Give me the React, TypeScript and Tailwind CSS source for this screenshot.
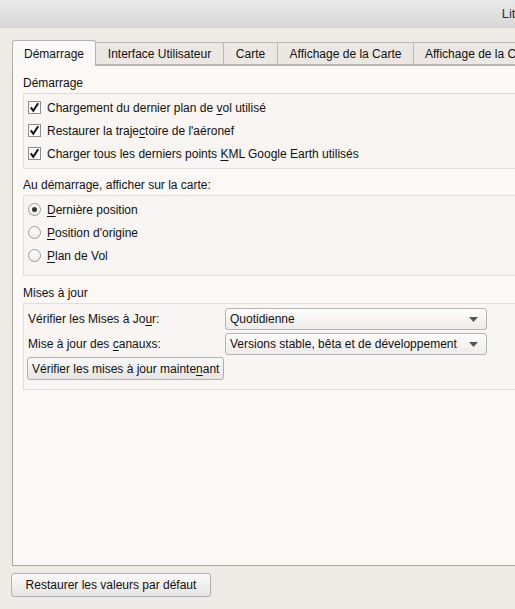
import React from "react";

const font = { fontFamily: '"Liberation Sans", Arial, sans-serif' };

const Ul = ({ children }: { children: React.ReactNode }) => (
  <span className="underline underline-offset-2">{children}</span>
);

const Check = ({ children }: { children: React.ReactNode }) => (
  <div className="flex items-center h-[23px] pl-[4px]">
    <span className="w-[13px] h-[13px] border border-[#8e8e8e] bg-white flex items-center justify-center mr-[6px]">
      <svg width="11" height="11" viewBox="0 0 11 11">
        <path d="M1.8 5.3 L4.3 8.8 L9.2 1.2" stroke="#111" strokeWidth="2" fill="none" />
      </svg>
    </span>
    <span>{children}</span>
  </div>
);

const Radio = ({ on, children }: { on?: boolean; children: React.ReactNode }) => (
  <div className="flex items-center h-[23px] pl-[4px]">
    <span className="w-[13px] h-[13px] rounded-full border border-[#9a9a9a] bg-gradient-to-b from-white to-[#ecebea] flex items-center justify-center mr-[6px]">
      {on && <span className="w-[5px] h-[5px] rounded-full bg-[#333]" />}
    </span>
    <span>{children}</span>
  </div>
);

const Combo = ({ children }: { children: React.ReactNode }) => (
  <div className="w-[262px] h-[22px] border border-[#b5b5b5] rounded-[3px] bg-gradient-to-b from-[#fdfdfd] to-[#eeecea] flex items-center justify-between pl-[4px] pr-[8px]">
    <span>{children}</span>
    <svg width="9" height="5" viewBox="0 0 9 5">
      <path d="M0 0 L9 0 L4.5 5 Z" fill="#555" />
    </svg>
  </div>
);

const Tab = ({ w, active, children }: { w: string; active?: boolean; children: React.ReactNode }) => (
  <div
    className={
      active
        ? `${w} h-[26px] -mb-px bg-[#fbf9f7] border border-b-0 border-[#b3b3b3] rounded-t-[3px] flex items-center justify-center relative z-10`
        : `${w} h-[23px] bg-[#ebe8e4] border border-l-0 border-[#b8b8b8] flex items-center justify-center shrink-0`
    }
  >
    {children}
  </div>
);

export default function App() {
  return (
    <div className="w-[515px] h-[609px] bg-[#eeebe7] text-[12px] leading-[18px] text-[#111] overflow-hidden flex flex-col" style={font}>
      <div className="h-[28px] bg-gradient-to-b from-[#e9e9e9] to-[#d8d8d8] border-b border-[#cfcfcf] flex items-center justify-end shrink-0">
        <span className="text-[13px] text-[#333] mr-[-4px]">Litt</span>
      </div>
      <div className="flex-1 flex flex-col pl-[12px] pt-[12px]">
        <div className="flex items-end whitespace-nowrap">
          <Tab w="w-[84px] shrink-0" active>Démarrage</Tab>
          <Tab w="w-[128px]">Interface Utilisateur</Tab>
          <Tab w="w-[54px]">Carte</Tab>
          <Tab w="w-[136px]">Affichage de la Carte</Tab>
          <Tab w="w-[130px] justify-start pl-[11px]">Affichage de la Carte</Tab>
        </div>
        <div className="h-[501px] bg-[#fbf8f5] border-l border-b border-[#a8a5a2] border-t border-t-[#b3b3b3] -mr-[2px] pl-[10px] pt-[8px]">
          <div className="mb-[1px]">Démarrage</div>
          <div className="border border-[#e1ddd9] bg-[#f8f5f2] pt-[2px] pb-[3px] mb-[7px]">
            <Check>Chargement du dernier plan de <Ul>v</Ul>ol utilisé</Check>
            <Check>Restaurer la traje<Ul>c</Ul>toire de l'aéronef</Check>
            <Check>Charger tous les derniers points <Ul>K</Ul>ML Google Earth utilisés</Check>
          </div>
          <div className="mb-[1px]">Au démarrage, afficher sur la carte:</div>
          <div className="border border-[#e1ddd9] bg-[#f8f5f2] pt-[2px] pb-[8px] mb-[8px]">
            <Radio on><Ul>D</Ul>ernière position</Radio>
            <Radio><Ul>P</Ul>osition d'origine</Radio>
            <Radio><Ul>P</Ul>lan de Vol</Radio>
          </div>
          <div className="mb-[1px]">Mises à jour</div>
          <div className="border border-[#e1ddd9] bg-[#f8f5f2] pt-[4px] pb-[9px] pl-[3px]">
            <div className="flex items-center mb-[3px]">
              <span className="w-[198px] pl-[1px]">Vérifier les Mises à Jo<Ul>u</Ul>r:</span>
              <Combo>Quotidienne</Combo>
            </div>
            <div className="flex items-center mb-[2px]">
              <span className="w-[198px] pl-[1px]">Mise à jour des <Ul>c</Ul>anauxs:</span>
              <Combo>Versions stable, bêta et de développement</Combo>
            </div>
            <button className="h-[23px] px-[4px] border border-[#b0b0b0] rounded-[3px] bg-gradient-to-b from-[#f9f9f9] to-[#e7e5e3]">
              Vérifier les mises à jour mainte<Ul>n</Ul>ant
            </button>
          </div>
        </div>
        <div className="pt-[7px] -ml-px">
          <button className="w-[200px] h-[24px] border border-[#b0b0b0] rounded-[3px] bg-gradient-to-b from-[#f9f9f9] to-[#e7e5e3]">
            Restaurer les valeurs par défaut
          </button>
        </div>
      </div>
    </div>
  );
}
